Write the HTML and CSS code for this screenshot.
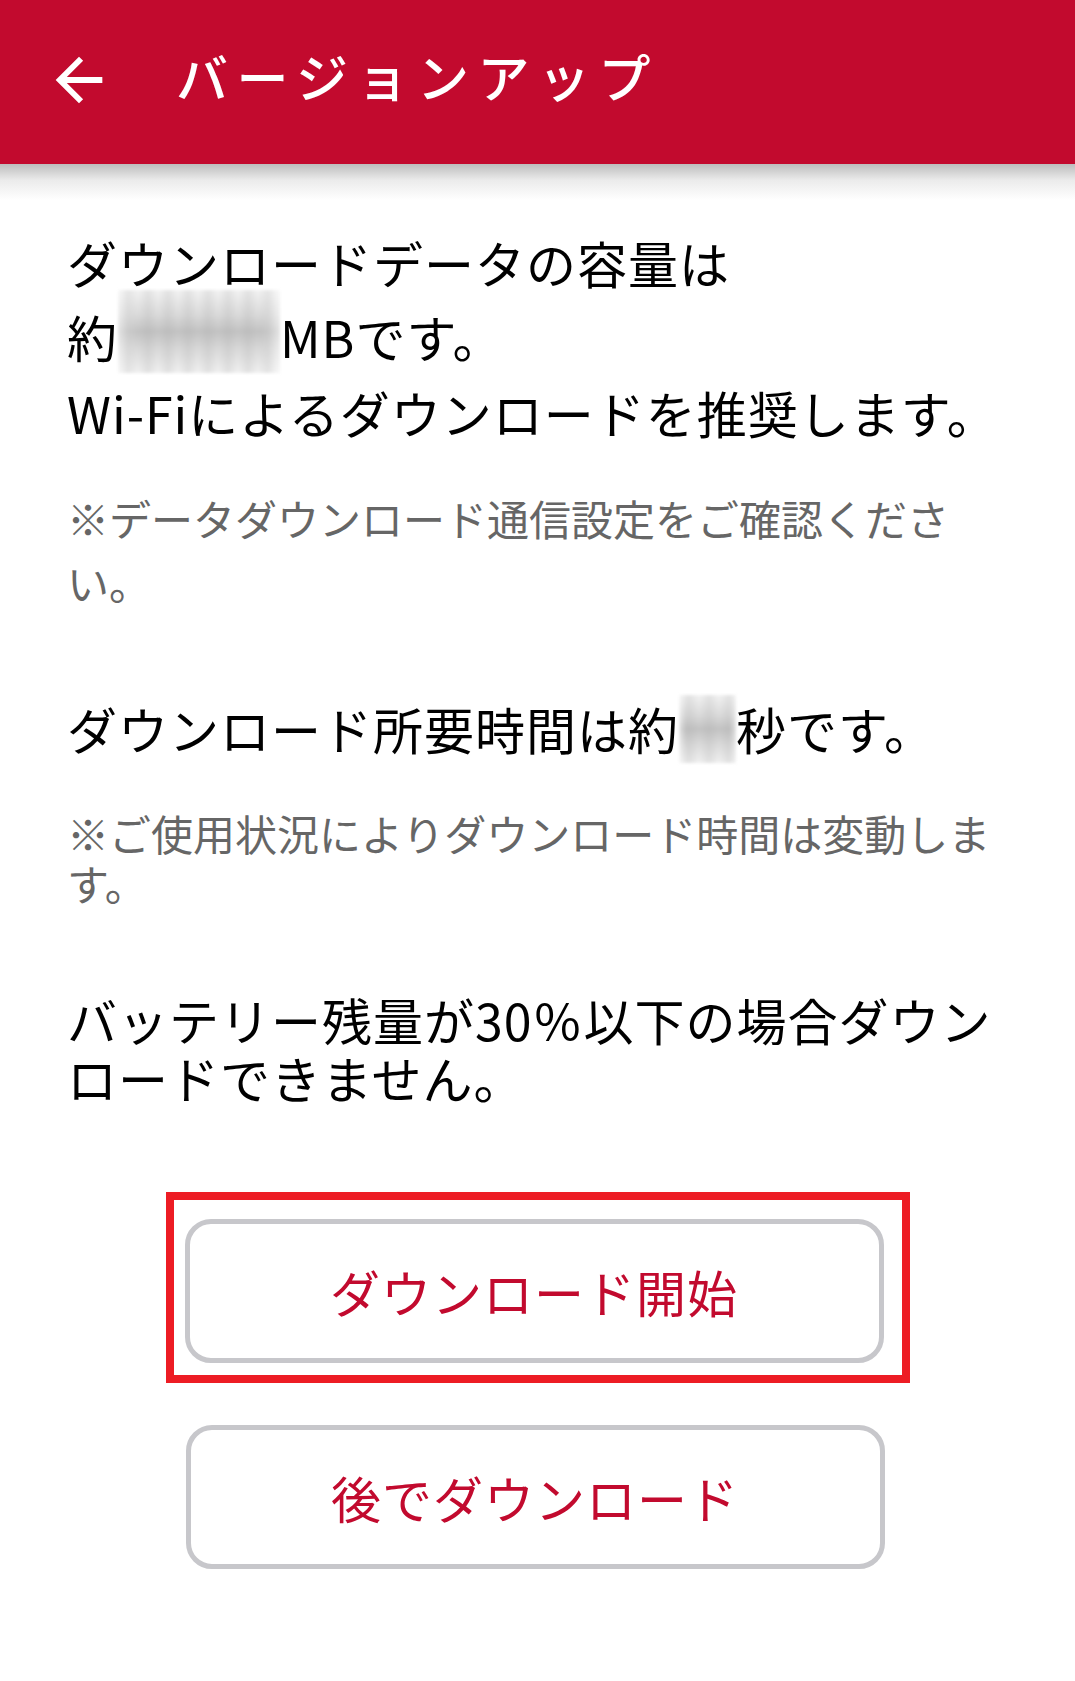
FILE: index.html
```html
<!DOCTYPE html>
<html lang="ja">
<head>
<meta charset="utf-8">
<title>バージョンアップ</title>
<link rel="stylesheet" href="styles.css">
</head>
<body>
<header class="appbar">
  <svg class="back" viewBox="0 0 24 24" width="70" height="70" aria-hidden="true">
    <path d="M20 11H7.83l5.59-5.59L12 4l-8 8 8 8 1.41-1.41L7.83 13H20v-2z" fill="#fff"/>
  </svg>
  <h1 class="title">バージョンアップ</h1>
</header>
<div class="appbar-shadow"></div>
<main class="content">
  <div class="lead">
    <div class="line l1">ダウンロードデータの容量は</div>
    <div class="line l2">約<span class="blur blur-mb"></span>MBです。</div>
    <div class="line l3">Wi-Fiによるダウンロードを推奨します。</div>
  </div>
  <p class="note note1">※データダウンロード通信設定をご確認ください。</p>
  <p class="text time">ダウンロード所要時間は約<span class="blur blur-sec"></span>秒です。</p>
  <p class="note note2">※ご使用状況によりダウンロード時間は変動します。</p>
  <p class="text battery">バッテリー残量が30％以下の場合ダウンロードできません。</p>
  <div class="highlight">
    <button class="btn btn-start" type="button">ダウンロード開始</button>
  </div>
  <button class="btn btn-later" type="button">後でダウンロード</button>
</main>
</body>
</html>
```
FILE: styles.css
```css
html, body {
  margin: 0;
  padding: 0;
  background: #fff;
}
body {
  font-family: "Noto Sans CJK JP", "Noto Sans", sans-serif;
  color: #000;
  width: 1075px;
}
.appbar {
  height: 164px;
  background: #c20a2e;
  display: flex;
  align-items: center;
  padding-bottom: 4px;
  box-sizing: border-box;
}
.back {
  display: block;
  margin-left: 44px;
  flex: none;
}
.title {
  margin: 0 0 9px 62px;
  font-size: 52px;
  font-weight: 500;
  letter-spacing: 8.5px;
  line-height: 64px;
  color: #fff;
  white-space: nowrap;
}
.appbar-shadow {
  height: 36px;
  background: linear-gradient(to bottom, rgba(0,0,0,0.26), rgba(0,0,0,0.08) 45%, rgba(0,0,0,0));
}
.content {
  padding: 26px 67px 0 67px;
}
.lead {
  font-size: 50px;
  letter-spacing: 1px;
}
.line {
  white-space: nowrap;
}
.l1 { line-height: 72px; }
.l2 { line-height: 76px; }
.l3 { line-height: 76px; }
.blur {
  display: inline-block;
  vertical-align: top;
  background:
    repeating-linear-gradient(to right, rgba(255,255,255,0) 0px, rgba(160,160,160,0.18) 10px, rgba(255,255,255,0) 20px),
    linear-gradient(to right, rgba(255,255,255,0.55), rgba(255,255,255,0) 12%, rgba(255,255,255,0) 88%, rgba(255,255,255,0.55)),
    linear-gradient(to bottom, #f3f3f3 0%, #dadada 30%, #c3c3c3 50%, #d8d8d8 70%, #f1f1f1 100%);
  filter: blur(1.5px);
}
.blur-mb {
  width: 162px;
  height: 83px;
  margin-top: -8px;
}
.blur-sec {
  width: 57px;
  height: 68px;
  margin-top: 3px;
}
.note {
  margin: 0;
  font-size: 42px;
  color: #666;
}
.note1 {
  margin-top: 36px;
  line-height: 64px;
}
.note2 {
  margin-top: 44px;
  line-height: 50px;
}
.text {
  margin: 0;
  font-size: 50px;
  letter-spacing: 1px;
}
.time {
  margin-top: 78px;
  line-height: 72px;
  white-space: nowrap;
}
.battery {
  margin-top: 82px;
  line-height: 58px;
}
.highlight {
  box-sizing: border-box;
  width: 744px;
  margin: 86px auto 0 auto;
  border: 8px solid #ed1c24;
  padding: 19px 17px 12px 11px;
}
.btn {
  display: block;
  box-sizing: border-box;
  width: 699px;
  height: 144px;
  background: #fff;
  border: 5px solid #c7c7cb;
  border-radius: 26px;
  font-family: "Noto Sans CJK JP", "Noto Sans", sans-serif;
  font-size: 50px;
  letter-spacing: 1px;
  color: #c20a2e;
  padding: 0;
  line-height: 1;
}
.btn-start {
  margin: 0;
}
.btn-later {
  margin: 42px 0 0 calc(50% - 352px);
}
```
